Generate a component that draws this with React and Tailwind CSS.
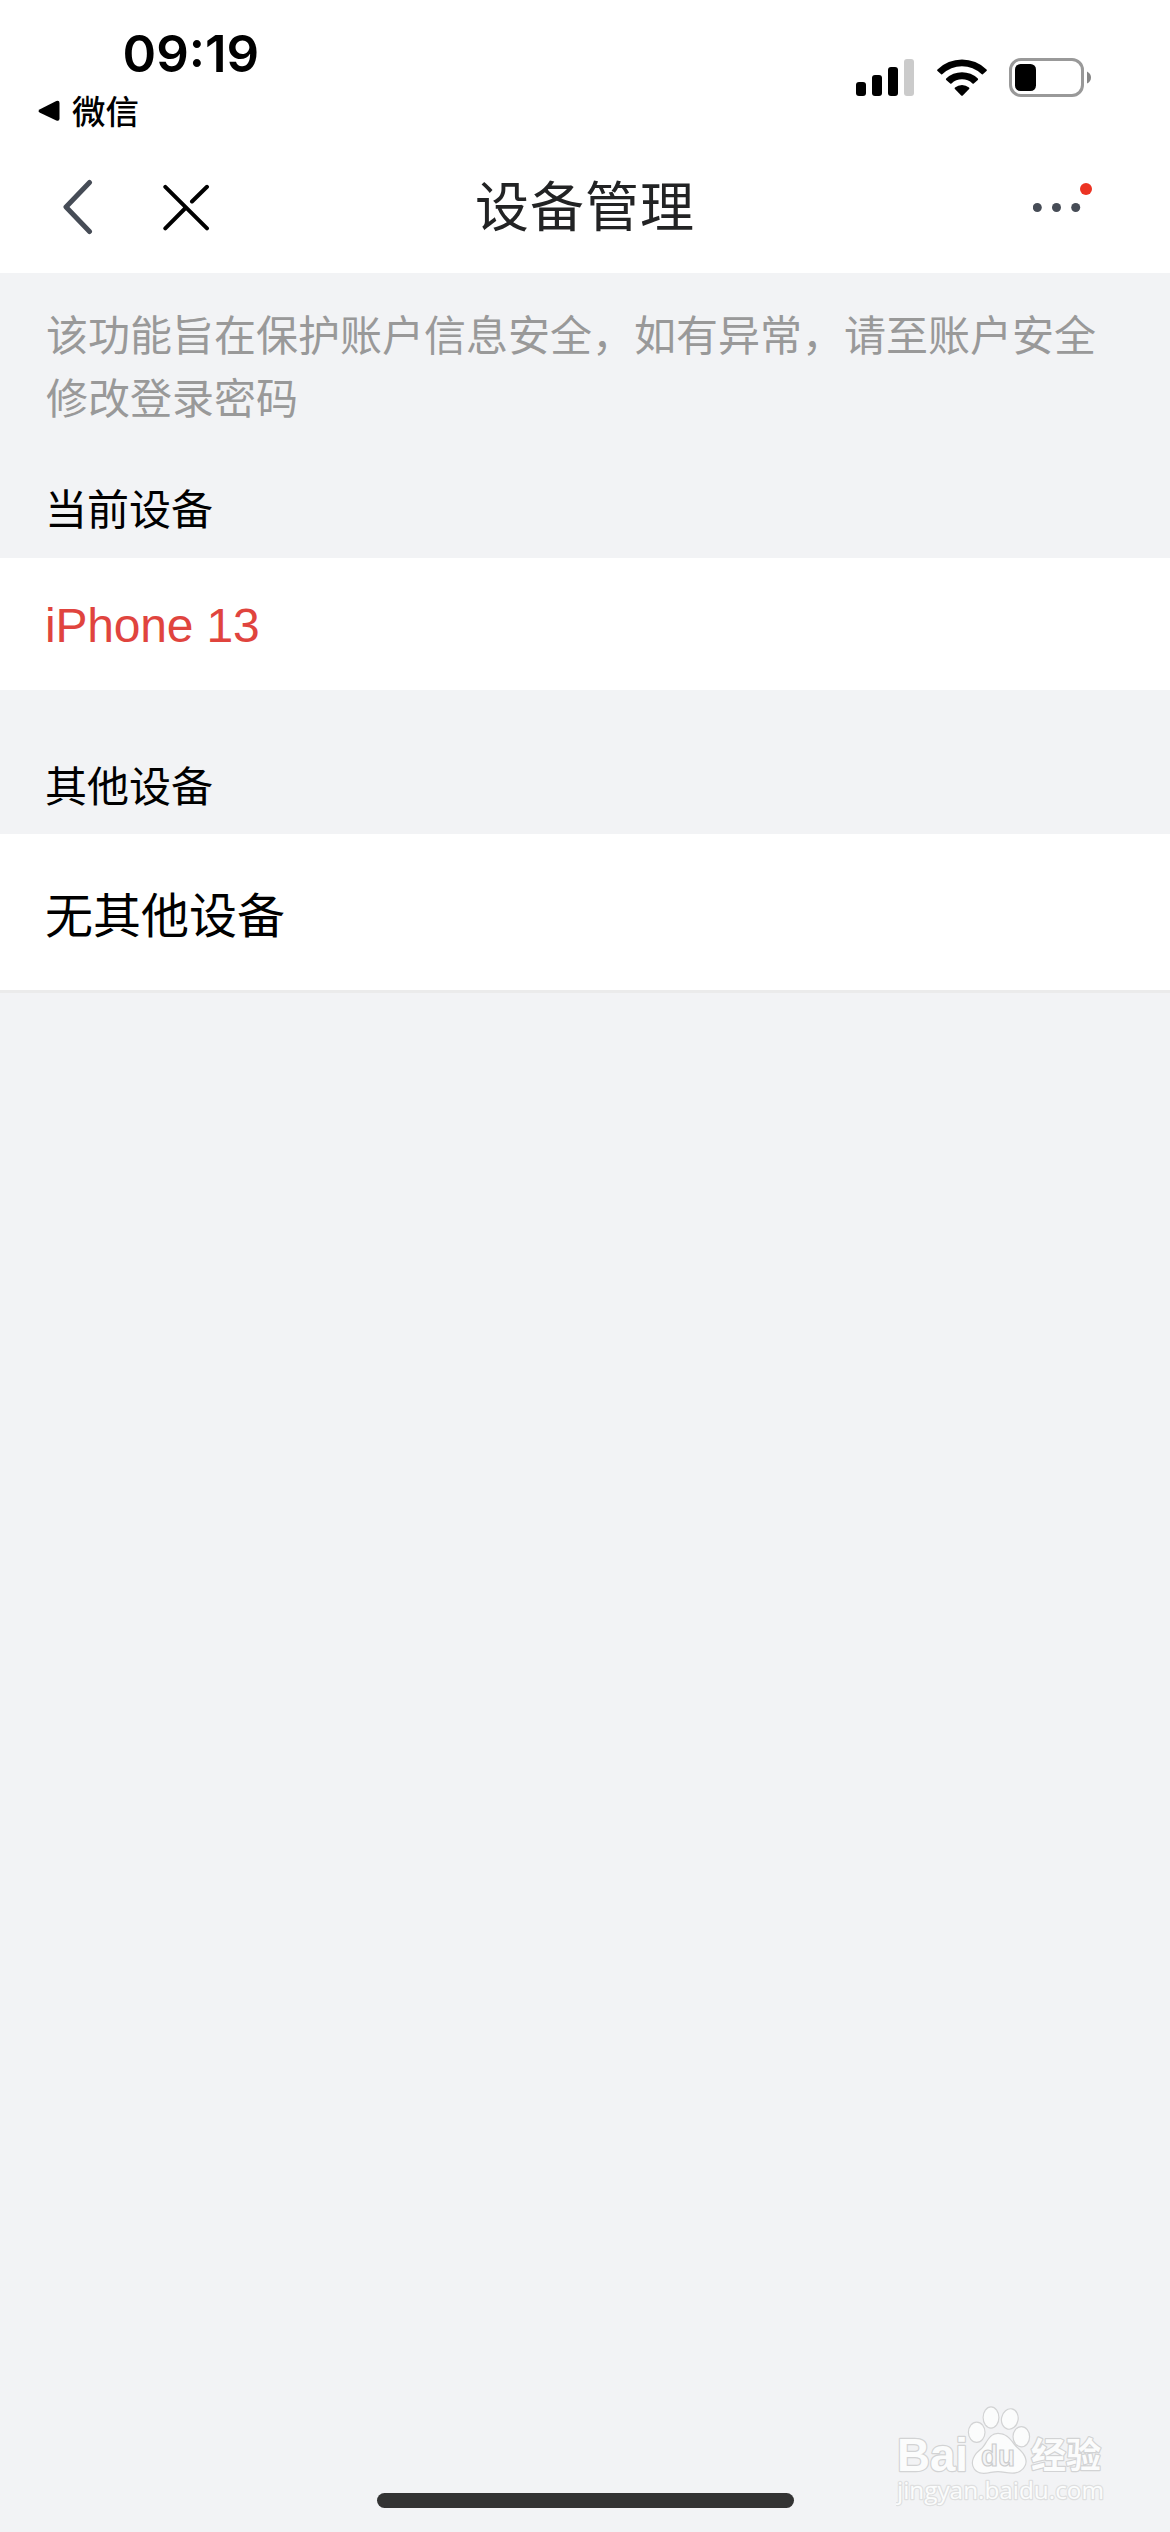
function StatusBar() {
  return (
    <div className="flex h-[144px] shrink-0 justify-between">
      <div className="w-[300px]">
        <div className="mt-[24px] ml-[122.5px] h-[60px] font-['Inter',sans-serif] text-[51px] leading-[60px] font-semibold tracking-[0px] whitespace-nowrap text-black">
          09:19
        </div>
        <div className="mt-[2px] ml-[38px] flex h-[48px] items-center">
          <svg width="22" height="22" viewBox="0 0 22 22" className="mt-[2px]">
            <path d="M2 9.200 18.300 1Q21.500 0 21.500 3V18.500Q21.500 21.500 18.300 20.500L2 12.800Q-1 11 2 9.200Z" fill="#000" />
          </svg>
          <span className="ml-[12px] font-['Noto_Sans_CJK_SC',sans-serif] text-[33.5px] leading-[48px] font-medium text-black">
            微信
          </span>
        </div>
      </div>
      <div className="mt-[58px] mr-[79px] flex h-[39px]">
        <svg width="58" height="39" viewBox="0 0 58 39">
          <rect x="0" y="24" width="10" height="14" rx="3" />
          <rect x="16" y="17" width="10" height="21" rx="3" />
          <rect x="32" y="9" width="10" height="29" rx="3" />
          <rect x="48" y="1" width="10" height="37" rx="3" fill="#cbcbcb" />
        </svg>
        <svg width="50" height="39" viewBox="0 0 50 39" className="ml-[22.5px]">
          <path d="M.5 11.500A35 35 0 0 1 49.500 11.500Q50.200 12.200 49.500 13L45.800 16.200Q45.200 16.700 44.500 16.100A28 28 0 0 0 5.500 16.100Q4.800 16.700 4.200 16.200L.5 13Q-.2 12.200 .5 11.500Z" />
          <path d="M9.200 20.500A22.800 22.800 0 0 1 40.800 20.500Q41.500 21.200 40.800 22L36.800 25.500Q36.200 26 35.500 25.400A15.500 15.500 0 0 0 14.500 25.400Q13.800 26 13.200 25.500L9.200 22Q8.500 21.200 9.200 20.500Z" />
          <path d="M18 29.400A11 11 0 0 1 32 29.400Q32.800 30.100 32.100 30.900L25.800 37.400Q25 38.200 24.200 37.400L17.900 30.900Q17.200 30.100 18 29.400Z" />
        </svg>
        <svg width="82" height="39" viewBox="0 0 82 39" className="ml-[22.5px]">
          <rect x="1.500" y="1.500" width="72" height="36" rx="10.500" fill="none" stroke="#999" strokeWidth="3" />
          <rect x="6" y="6" width="21" height="27" rx="5.500" />
          <path d="M78 13.500Q82 15.500 82 19.500Q82 23.500 78 25.500Z" fill="#868686" />
        </svg>
      </div>
    </div>
  );
}

function NavBar() {
  return (
    <div className="grid h-[129px] shrink-0 grid-cols-[1fr_auto_1fr]">
      <div className="flex pl-[62px]">
        <svg width="32" height="56" viewBox="0 0 32 56" className="mt-[35px]" fill="none" stroke="#464c56" strokeWidth="5" strokeLinecap="round" strokeLinejoin="round">
          <path d="M27.500 3.500 4 28 27.500 52.500" />
        </svg>
        <svg width="48" height="48" viewBox="0 0 48 48" className="mt-[39px] ml-[68px]" fill="none" stroke="#000" strokeWidth="4" strokeLinecap="round">
          <path d="M3.300 3.800 45 45.300M3.300 45.300 24 24.500M30 18.500 45 3.800" />
        </svg>
      </div>
      <h1 className="mt-[20px] font-['Noto_Sans_CJK_SC',sans-serif] text-[54px] leading-[80px] font-normal tracking-[1px] text-[#222324]">
        设备管理
      </h1>
      <div className="flex justify-end pr-[77px]">
        <svg width="60" height="32" viewBox="0 0 60 32" className="mt-[37px]">
          <g fill="#464c56">
            <circle cx="4.300" cy="26.500" r="4.500" />
            <circle cx="23.500" cy="26.500" r="4.500" />
            <circle cx="42.700" cy="26.500" r="4.500" />
          </g>
          <circle cx="53" cy="8" r="6" fill="#ec3323" />
        </svg>
      </div>
    </div>
  );
}

function Watermark() {
  return (
    <svg width="220" height="110" viewBox="0 0 220 110" className="absolute right-[54px] bottom-[19px]">
      <g fill="#fbfcfc" stroke="#d2d3d4" strokeWidth="2.400" strokeLinejoin="round" style={{ paintOrder: "stroke" }}>
        <text x="1" y="68" fontFamily="Liberation Sans" fontWeight="700" fontSize="46" textLength="71" lengthAdjust="spacingAndGlyphs">Bai</text>
        <ellipse cx="80.700" cy="29.300" rx="7.700" ry="9.500" />
        <ellipse cx="95" cy="14.500" rx="7.300" ry="10" />
        <ellipse cx="113.800" cy="16" rx="7.700" ry="9.700" transform="rotate(12 113.800 16)" />
        <ellipse cx="125.300" cy="33.700" rx="7.700" ry="9.500" />
        <path d="M102 31C113 31 115 40 122 46C129 52 132 59 127 65C120 73 110 68 102 68C94 68 85 73 79 66C74 59 79 51 86 46C92 40 93 31 102 31Z" />
        <text x="135" y="65" fontFamily="Noto Sans CJK SC" fontWeight="700" fontSize="35">经验</text>
      </g>
      <text x="1" y="96" fontFamily="Open Sans" fontSize="24" fill="#fbfcfc" stroke="#dedfe0" strokeWidth="2.400" strokeLinejoin="round" style={{ paintOrder: "stroke" }} textLength="207" lengthAdjust="spacingAndGlyphs">jingyan.baidu.com</text>
      <text x="85" y="63" fontFamily="Liberation Sans" fontWeight="700" fontSize="30" fill="#f4f5f6" stroke="#cbcccd" strokeWidth="1.200" textLength="34" lengthAdjust="spacingAndGlyphs">du</text>
    </svg>
  );
}

export default function App() {
  return (
    <div className="relative flex h-[2532px] w-[1170px] flex-col overflow-hidden bg-[#f2f3f5] text-black">
      <header className="flex h-[273px] shrink-0 flex-col bg-white">
        <StatusBar />
        <NavBar />
      </header>
      <main className="flex flex-col font-['Noto_Sans_CJK_SC',sans-serif]">
        <p className="mt-[28px] px-[46px] text-[42px] leading-[63px] text-[#999]">
          该功能旨在保护账户信息安全，如有异常，请至账户安全修改登录密码
        </p>
        <h2 className="mt-[48px] h-[83px] px-[45px] text-[42px] leading-[63px] font-normal">当前设备</h2>
        <div className="flex h-[132px] items-center bg-white px-[45px] font-['Liberation_Sans',sans-serif] text-[48px] tracking-[-0.2px] text-[#e0443e]">
          <span className="mt-[4px] leading-[56px]">iPhone 13</span>
        </div>
        <h2 className="mt-[62px] h-[82px] px-[45px] text-[42px] leading-[63px] font-normal">其他设备</h2>
        <div className="flex h-[159px] items-center border-b-[3px] border-[#ebebeb] bg-white px-[45px] text-[48px]">
          <span className="leading-[72px]">无其他设备</span>
        </div>
      </main>
      <div className="mt-auto mb-[24px] h-[15px] w-[417px] self-center rounded-full bg-[#333]" />
      <Watermark />
    </div>
  );
}
